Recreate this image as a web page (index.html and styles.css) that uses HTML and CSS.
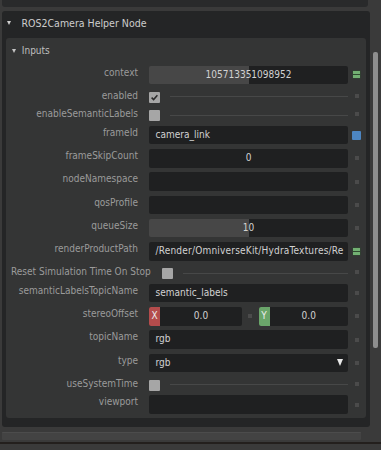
FILE: index.html
```html
<!DOCTYPE html>
<html>
<head>
    <title>ROS2Camera Helper Node</title>
    <meta charset="utf-8">
    <link rel="stylesheet" href="styles.css">
</head>
<body>
    <div class="prev_frame"></div>

    <div class="window">
        <div class="node_frame">
            <div class="frame_head"><span class="tri"></span>ROS2Camera Helper Node</div>

            <div class="inputs">
                <div class="inputs_head"><span class="tri small"></span>Inputs</div>

                <div class="rows">
                    <div class="row">
                        <div class="label">context</div>
                        <div class="field num slider">105713351098952</div>
                        <div class="ind"><svg class="ico_green" width="9" height="9" viewBox="0 0 9 9"><rect x="0.5" y="0.5" width="8" height="8" fill="#2f4a30"/><rect x="1" y="1" width="7" height="3" fill="#72b072"/><rect x="1" y="5" width="7" height="3" fill="#72b072"/></svg></div>
                    </div>
                    <div class="row check">
                        <div class="label">enabled</div>
                        <div class="ctl">
                            <div class="checkbox"><svg width="11" height="11" viewBox="0 0 11 11"><path d="M2.6 5.6 L4.6 7.6 L8.4 3.2" fill="none" stroke="#2b2b2b" stroke-width="1.5"/></svg></div>
                            <div class="rule"></div>
                        </div>
                        <div class="ind"><span class="dot"></span></div>
                    </div>
                    <div class="row check">
                        <div class="label">enableSemanticLabels</div>
                        <div class="ctl">
                            <div class="checkbox"></div>
                            <div class="rule"></div>
                        </div>
                        <div class="ind"><span class="dot"></span></div>
                    </div>
                    <div class="row">
                        <div class="label">frameId</div>
                        <div class="field">camera_link</div>
                        <div class="ind"><span class="ico_blue"></span></div>
                    </div>
                    <div class="row">
                        <div class="label">frameSkipCount</div>
                        <div class="field num">0</div>
                        <div class="ind"><span class="dot"></span></div>
                    </div>
                    <div class="row">
                        <div class="label">nodeNamespace</div>
                        <div class="field"></div>
                        <div class="ind"><span class="dot"></span></div>
                    </div>
                    <div class="row">
                        <div class="label">qosProfile</div>
                        <div class="field"></div>
                        <div class="ind"><span class="dot"></span></div>
                    </div>
                    <div class="row">
                        <div class="label">queueSize</div>
                        <div class="field num slider">10</div>
                        <div class="ind"><span class="dot"></span></div>
                    </div>
                    <div class="row">
                        <div class="label">renderProductPath</div>
                        <div class="field path">/Render/OmniverseKit/HydraTextures/Re</div>
                        <div class="ind"><svg class="ico_green" width="9" height="9" viewBox="0 0 9 9"><rect x="0.5" y="0.5" width="8" height="8" fill="#2f4a30"/><rect x="1" y="1" width="7" height="3" fill="#72b072"/><rect x="1" y="5" width="7" height="3" fill="#72b072"/></svg></div>
                    </div>
                    <div class="row check">
                        <div class="label">Reset Simulation Time On Stop</div>
                        <div class="ctl">
                            <div class="checkbox"></div>
                            <div class="rule"></div>
                        </div>
                        <div class="ind"><span class="dot"></span></div>
                    </div>
                    <div class="row">
                        <div class="label">semanticLabelsTopicName</div>
                        <div class="field">semantic_labels</div>
                        <div class="ind"><span class="dot"></span></div>
                    </div>
                    <div class="row">
                        <div class="label">stereoOffset</div>
                        <div class="vec">
                            <div class="vpart first"><span class="badge x">X</span><span class="vval">0.0</span></div>
                            <div class="vsep"><span class="dot"></span></div>
                            <div class="vpart"><span class="badge y">Y</span><span class="vval">0.0</span></div>
                        </div>
                        <div class="ind"><span class="dot"></span></div>
                    </div>
                    <div class="row">
                        <div class="label">topicName</div>
                        <div class="field">rgb</div>
                        <div class="ind"><span class="dot"></span></div>
                    </div>
                    <div class="row">
                        <div class="label">type</div>
                        <div class="field combo"><span>rgb</span><span class="arrow"></span></div>
                        <div class="ind"><span class="dot"></span></div>
                    </div>
                    <div class="row check">
                        <div class="label">useSystemTime</div>
                        <div class="ctl">
                            <div class="checkbox"></div>
                            <div class="rule"></div>
                        </div>
                        <div class="ind"><span class="dot"></span></div>
                    </div>
                    <div class="row">
                        <div class="label">viewport</div>
                        <div class="field"></div>
                        <div class="ind"><span class="dot"></span></div>
                    </div>
                </div>
            </div>
        </div>

        <div class="scroll">
            <div class="thumb"></div>
        </div>
    </div>

    <div class="bottom_bar"></div>
    <div class="bottom_line"></div>
</body>
</html>
```

FILE: styles.css
```css
body {
    margin: 0;
    width: 381px;
    height: 450px;
    overflow: hidden;
    background-color: #3a3a3a;
    font-family: "DejaVu Sans Condensed", "Open Sans", sans-serif;
    font-size: 10px;
}

.prev_frame {
    height: 6.5px;
    margin: 0 13px 0 2px;
    background-color: #292a2b;
    border-radius: 0 0 3px 3px;
}

.window {
    display: flex;
    margin-top: 4.5px;
}

.node_frame {
    width: 368px;
    height: 416px;
    margin-left: 2px;
    padding: 0 4px;
    box-sizing: border-box;
    background-color: #242526;
    border-radius: 3px;
}

.frame_head {
    display: flex;
    align-items: center;
    height: 27px;
    line-height: 24px;
    padding-bottom: 3px;
    box-sizing: border-box;
    color: #cdcdcd;
    font-size: 10.5px;
}

.tri {
    width: 0;
    height: 0;
    margin: 0 10.5px 0 1px;
    border-left: 2.5px solid transparent;
    border-right: 2.5px solid transparent;
    border-top: 4px solid #cfcfcf;
}

.tri.small {
    margin: 0 5.5px 0 0;
    border-top-color: #c4c4c4;
}

.inputs {
    height: 380.3px;
    background-color: #343535;
    border-radius: 3px;
}

.inputs_head {
    display: flex;
    align-items: center;
    height: 25.4px;
    padding-left: 6.3px;
    color: #bfbfbf;
}

.rows {
    display: flex;
    flex-direction: column;
    gap: 4.7px;
    padding: 2.3px 5px 0;
}

.row {
    display: flex;
    height: 18.6px;
}

.row.check {
    height: 13.7px;
}

.label {
    flex: none;
    min-width: 127px;
    margin-right: 11px;
    line-height: 14px;
    text-align: right;
    white-space: nowrap;
    color: #9b9b9b;
}

.field {
    flex: 1;
    min-width: 0;
    padding: 0 6.5px;
    line-height: 18.6px;
    white-space: nowrap;
    overflow: hidden;
    color: #d2d2d2;
    background-color: #1f2021;
    border-radius: 2px;
}

.field.num {
    text-align: center;
}

.field.path {
    padding-right: 0;
    letter-spacing: 0.2px;
}

.field.slider {
    background: linear-gradient(90deg, #474747 100px, #1f2021 100px);
}

.field.combo {
    display: flex;
    align-items: center;
    justify-content: space-between;
}

.arrow {
    width: 0;
    height: 0;
    margin-right: -1.5px;
    border-left: 3.8px solid transparent;
    border-right: 3.8px solid transparent;
    border-top: 7px solid #e8e8e8;
}

.ind {
    flex: none;
    width: 9px;
    margin-left: 4px;
    display: flex;
    align-items: center;
    justify-content: center;
}

.dot {
    width: 4px;
    height: 4px;
    background-color: #4b4b4b;
}

.ico_blue {
    width: 9px;
    height: 9px;
    background-color: #4d86c2;
    border-radius: 1px;
}

.ctl {
    flex: 1;
    display: flex;
    align-items: flex-start;
}

.checkbox {
    width: 11px;
    height: 11px;
    margin-top: 3px;
    background-color: #a6a6a6;
    border-radius: 1px;
}

.checkbox svg {display: block}

.rule {
    flex: 1;
    height: 1px;
    margin: 7.5px 0 0 10px;
    background-color: #474848;
}

.vec {
    flex: 1;
    display: flex;
}

.vpart {
    flex: 1;
    display: flex;
    background-color: #1f2021;
    border-radius: 2px;
    overflow: hidden;
    color: #d2d2d2;
    line-height: 18.6px;
}

.vpart.first {
    flex: none;
    width: 93px;
}

.badge {
    width: 11px;
    text-align: center;
    color: #ececec;
}

.badge.x {background-color: #b44c4c}
.badge.y {background-color: #6aa56a}

.vval {
    flex: 1;
    text-align: center;
}

.vsep {
    width: 16.5px;
    display: flex;
    align-items: center;
    justify-content: center;
}

.scroll {
    width: 11px;
}

.thumb {
    width: 5px;
    height: 296px;
    margin: 41px 0 0 3px;
    background-color: #8e8e8e;
    border-radius: 2px;
}

.bottom_bar {
    width: 359px;
    height: 8px;
    margin: 5px 0 0 2px;
    box-sizing: border-box;
    background-color: #434343;
    border-top: 1px solid #4c4c4c;
    border-radius: 1px;
}

.bottom_line {
    height: 2.6px;
    margin-top: 1.7px;
    background-color: #231f1d;
}
```
